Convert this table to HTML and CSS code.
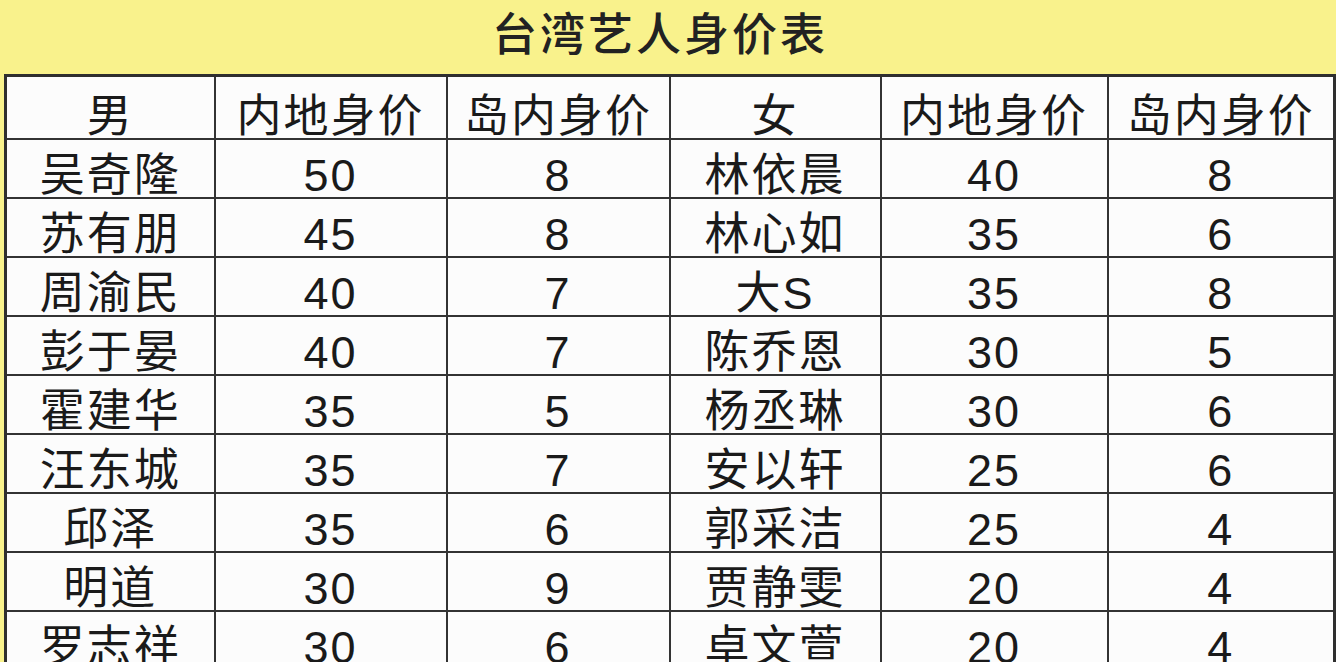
FILE: index.html
```html
<!DOCTYPE html>
<html lang="zh-CN">
<head>
<meta charset="utf-8">
<title>台湾艺人身价表</title>
<link rel="stylesheet" href="styles.css">
</head>
<body>
<div class="sheet">
  <h1 class="title">台湾艺人身价表</h1>
  <table class="prices">
    <colgroup>
      <col class="c1"><col class="c2"><col class="c3"><col class="c4"><col class="c5"><col class="c6">
    </colgroup>
    <thead>
      <tr class="head"><th>男</th><th>内地身价</th><th>岛内身价</th><th>女</th><th>内地身价</th><th>岛内身价</th></tr>
    </thead>
    <tbody>
      <tr><td>吴奇隆</td><td>50</td><td>8</td><td>林依晨</td><td>40</td><td>8</td></tr>
      <tr><td>苏有朋</td><td>45</td><td>8</td><td>林心如</td><td>35</td><td>6</td></tr>
      <tr><td>周渝民</td><td>40</td><td>7</td><td>大S</td><td>35</td><td>8</td></tr>
      <tr><td>彭于晏</td><td>40</td><td>7</td><td>陈乔恩</td><td>30</td><td>5</td></tr>
      <tr><td>霍建华</td><td>35</td><td>5</td><td>杨丞琳</td><td>30</td><td>6</td></tr>
      <tr><td>汪东城</td><td>35</td><td>7</td><td>安以轩</td><td>25</td><td>6</td></tr>
      <tr><td>邱泽</td><td>35</td><td>6</td><td>郭采洁</td><td>25</td><td>4</td></tr>
      <tr><td>明道</td><td>30</td><td>9</td><td>贾静雯</td><td>20</td><td>4</td></tr>
      <tr><td>罗志祥</td><td>30</td><td>6</td><td>卓文萱</td><td>20</td><td>4</td></tr>
    </tbody>
  </table>
</div>
</body>
</html>
```
FILE: styles.css
```css
html, body {
  margin: 0;
  padding: 0;
  height: 662px;
  overflow: hidden;
  background: #f9f28c;
}
.sheet {
  width: 1336px;
  display: flex;
  flex-direction: column;
  align-items: flex-start;
}
.title {
  margin: 0;
  width: 1336px;
  height: 74px;
  box-sizing: border-box;
  padding: 0 16px 0 0;
  text-align: center;
  font-family: "Noto Sans CJK SC", sans-serif;
  font-weight: 500;
  font-size: 45px;
  letter-spacing: 3px;
  line-height: 64px;
  color: #222;
}
.prices {
  margin-left: 4px;
  width: 1330px;
  table-layout: fixed;
  border-collapse: collapse;
  background: #fcfcfc;
  border: 3px solid #2f2f2f;
  font-family: "Liberation Sans", "Noto Sans CJK SC", sans-serif;
  font-size: 45px;
  color: #1a1a1a;
}
.c1 { width: 209px; }
.c2 { width: 232px; }
.c3 { width: 223px; }
.c4 { width: 211px; }
.c5 { width: 227px; }
.c6 { width: 227px; }
.prices th, .prices td {
  border: 2px solid #333;
  padding: 16px 0 0;
  vertical-align: top;
  text-align: center;
  font-weight: 400;
  line-height: 40px;
  letter-spacing: 2px;
  white-space: nowrap;
}
.prices tr { height: 59px; }
.prices tr.head { height: 63px; }
.prices tr.head th { padding-top: 20px; }
```
